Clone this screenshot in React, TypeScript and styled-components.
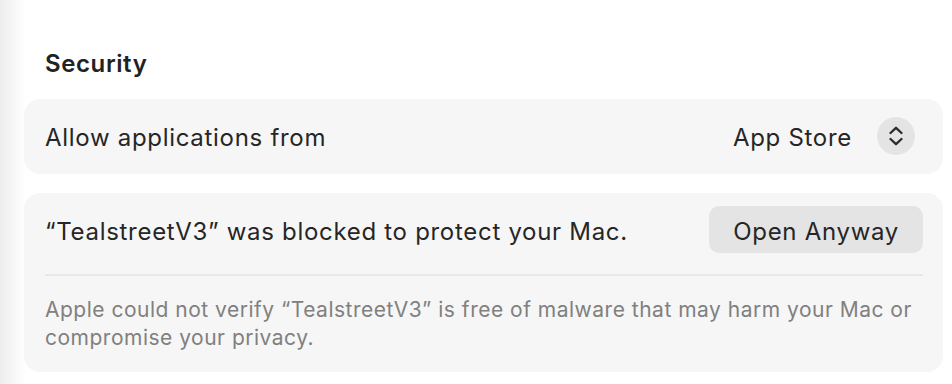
import styled, { createGlobalStyle } from "styled-components";

const GlobalStyle = createGlobalStyle`
  html, body {
    margin: 0;
    padding: 0;
    width: 952px;
    height: 384px;
    overflow: hidden;
    background: linear-gradient(to right, #ededed 0px, #f7f7f7 14px, #ffffff 26px);
    font-family: Inter, "Noto Sans", sans-serif;
    color: #262626;
    -webkit-font-smoothing: antialiased;
  }
`;

const Page = styled.div`
  padding: 49px 9px 0 24px;
  display: flex;
  flex-direction: column;
`;

const SectionTitle = styled.h2`
  margin: 0 0 20px 21px;
  font-size: 24px;
  font-weight: 600;
  letter-spacing: 0.6px;
  line-height: 30px;
  color: #222;
`;

const Card = styled.div<{ gap?: number }>`
  background: #f6f6f6;
  border-radius: 16px;
  padding: 0 20px 0 21px;
  margin-bottom: ${(p) => p.gap ?? 0}px;
`;

const Row = styled.div<{ pad: string }>`
  padding: ${(p) => p.pad};
  display: flex;
  align-items: center;
  justify-content: space-between;
`;

const Label = styled.span`
  padding-top: 4px;
  font-size: 24px;
  letter-spacing: 0.7px;
  line-height: 30px;
  color: #262626;
`;

const PopupWrap = styled.div`
  display: flex;
  align-items: center;
  gap: 25px;
  margin-right: 8px;
`;

const Stepper = styled.span`
  width: 38px;
  height: 38px;
  border-radius: 50%;
  background: #e4e4e4;
  display: flex;
  align-items: center;
  justify-content: center;
`;

const Button = styled.button`
  height: 47px;
  padding: 3px 24px 0;
  border: none;
  border-radius: 10px;
  background: #e4e4e4;
  font-family: inherit;
  font-size: 24px;
  letter-spacing: 0.7px;
  color: #262626;
`;

const Divider = styled.div`
  height: 2px;
  background: #e8e8e8;
`;

const Note = styled.p`
  margin: 0;
  padding: 20px 0 20px;
  font-size: 21px;
  letter-spacing: 0.5px;
  line-height: 28px;
  color: #808080;
`;

function Chevrons() {
  return (
    <svg width="38" height="38" viewBox="0 0 38 38">
      <path
        d="M13.5 16 L19 10.8 L24.5 16 M13.5 22 L19 27.2 L24.5 22"
        fill="none"
        stroke="#2b2b2b"
        strokeWidth="2.3"
        strokeLinecap="round"
        strokeLinejoin="round"
      />
    </svg>
  );
}

export default function App() {
  return (
    <>
      <GlobalStyle />
      <Page>
        <SectionTitle>Security</SectionTitle>
        <Card gap={19}>
          <Row pad="18px 0 19px">
            <Label>Allow applications from</Label>
            <PopupWrap>
              <Label>App Store</Label>
              <Stepper>
                <Chevrons />
              </Stepper>
            </PopupWrap>
          </Row>
        </Card>
        <Card>
          <Row pad="13px 0 21px">
            <Label>“TealstreetV3” was blocked to protect your Mac.</Label>
            <Button>Open Anyway</Button>
          </Row>
          <Divider />
          <Note>
            Apple could not verify “TealstreetV3” is free of malware that may harm your Mac or
            compromise your privacy.
          </Note>
        </Card>
      </Page>
    </>
  );
}
